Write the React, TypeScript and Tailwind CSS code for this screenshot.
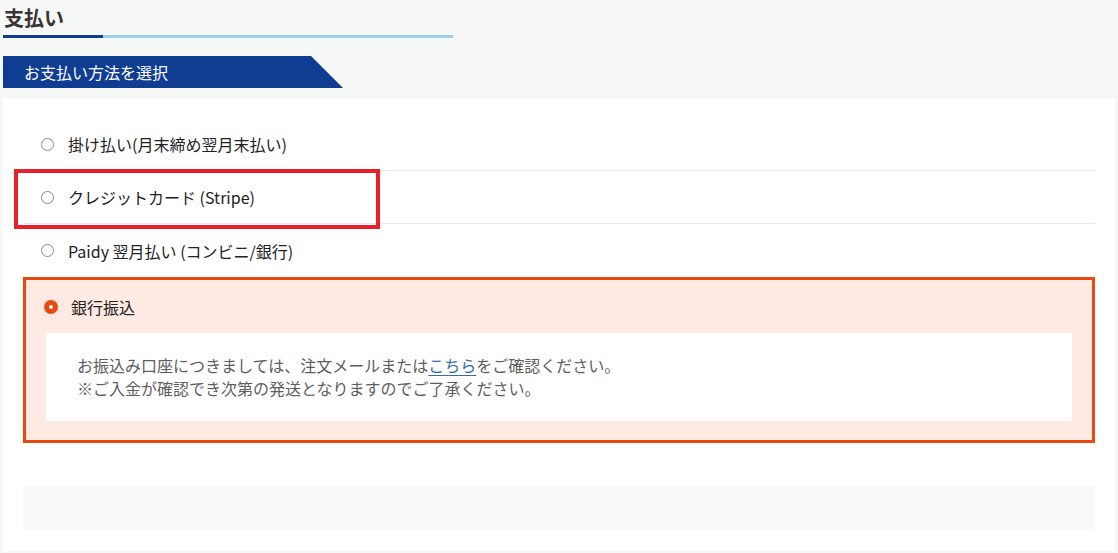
import React from "react"

const methods = [
  { id: "invoice", label: "掛け払い(月末締め翌月末払い)" },
  { id: "stripe", label: "クレジットカード (Stripe)", marked: true },
  { id: "paidy", label: "Paidy 翌月払い (コンビニ/銀行)" },
]

function Radio() {
  return <span className="h-[13px] w-[13px] shrink-0 rounded-full border border-[#8a8a8a] bg-white" />
}

export default function App() {
  return (
    <div
      className="min-h-[553px] w-[1118px] bg-[#f6f8f8] text-[#333]"
      style={{ fontFamily: '"Noto Sans CJK JP", "Noto Sans", sans-serif' }}
    >
      <div className="px-[3px] pt-[4px]">
        <h2 className="pl-[1px] text-[20px] font-bold leading-[28px] text-[#3a3430]">支払い</h2>
        <div className="mt-[3px] flex h-[3px] w-[450px]">
          <div className="w-[100px] bg-[#0f3d91]" />
          <div className="flex-1 bg-[#9fd0e8]" />
        </div>
        <div
          className="mt-[18px] flex h-[32px] w-[340px] items-center bg-[#0f3d91] pl-[21px] text-[16px] text-white"
          style={{ clipPath: "polygon(0 0, 308px 0, 340px 100%, 0 100%)" }}
        >
          お支払い方法を選択
        </div>
      </div>

      <div className="mx-[3px] mt-[10px] w-[1112px] bg-white px-[20px] pb-[20px] pt-[20px]">
        {methods.map((m, i) => (
          <div
            key={m.id}
            className={`relative flex h-[53px] items-center gap-[14px] pl-[18px] text-[16px] text-[#222] ${
              i < 2 ? "border-b border-[#e8e8e8]" : ""
            }`}
          >
            <Radio />
            <span>{m.label}</span>
            {m.marked && (
              <div className="pointer-events-none absolute left-[-9px] top-[-2px] h-[60px] w-[366px] border-[4px] border-[#e8202a]" />
            )}
          </div>
        ))}

        <div className="border-[3px] border-[#e84a10] bg-[#ffeae3] px-[20px] pb-[19px]">
          <div className="flex h-[53px] items-center gap-[13px] text-[16px] text-[#222]">
            <span className="ml-[-2px] h-[14px] w-[14px] rounded-full border-[5px] border-[#e84a10] bg-white" />
            <span>銀行振込</span>
          </div>
          <div className="bg-white py-[21px] pl-[31px] text-[16px] leading-[23px] text-[#5e5e5e]">
            <p>
              お振込み口座につきましては、注文メールまたは
              <a href="#" className="text-[#2f6bb0] underline underline-offset-[3px]">
                こちら
              </a>
              をご確認ください。
            </p>
            <p>※ご入金が確認でき次第の発送となりますのでご了承ください。</p>
          </div>
        </div>

        <div className="mt-[43px] h-[45px] bg-[#f9f9f9]" />
      </div>
    </div>
  )
}
